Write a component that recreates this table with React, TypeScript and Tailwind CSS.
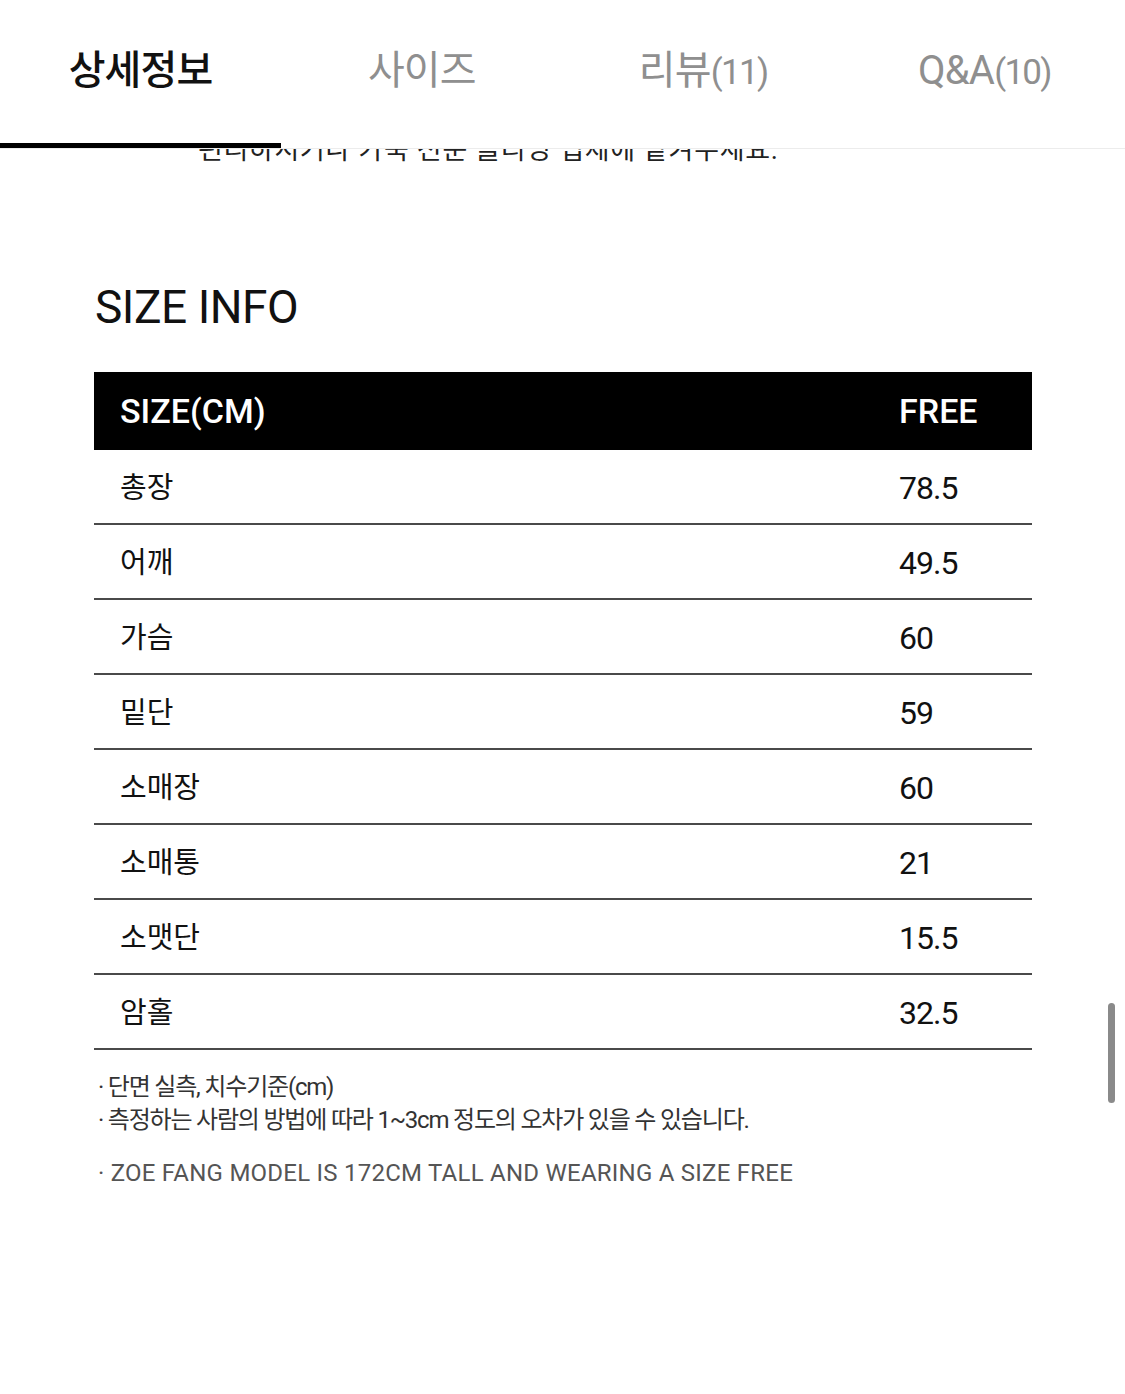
import React from 'react';

const tabs = [
  { label: '상세정보', count: '', active: true },
  { label: '사이즈', count: '', active: false },
  { label: '리뷰', count: '(11)', active: false },
  { label: 'Q&A', count: '(10)', active: false },
];

const rows: [string, string][] = [
  ['총장', '78.5'],
  ['어깨', '49.5'],
  ['가슴', '60'],
  ['밑단', '59'],
  ['소매장', '60'],
  ['소매통', '21'],
  ['소맷단', '15.5'],
  ['암홀', '32.5'],
];

const font = 'font-["Roboto","Noto_Sans_CJK_KR",sans-serif]';

export default function App() {
  return (
    <div className={`relative w-[1125px] h-[1394px] overflow-hidden bg-white ${font}`}>
      {/* 탭 */}
      <nav className="grid grid-cols-4 h-[149px] border-b border-[#ececec]">
        {tabs.map((t) => (
          <div key={t.label} className="flex flex-col items-center">
            <span
              className={
                'mt-[45px] text-[40px] leading-[52px] tracking-[-0.02em] ' +
                (t.active ? 'font-medium text-[#111]' : 'text-[#8f8f8f]')
              }
            >
              {t.label}
              {t.count && <span className="text-[35px] tracking-[-0.05em]">{t.count}</span>}
            </span>
            <div className="flex-1" />
            {t.active && <div className="self-stretch h-[5px] bg-black" />}
          </div>
        ))}
      </nav>

      {/* 탭 아래로 잘린 본문 */}
      <div className="h-[16px] overflow-hidden pl-[198px]">
        <p className="-mt-[14px] text-[27px] leading-[30px] text-[#222] tracking-[0.025em] whitespace-nowrap">
          편리하시거나 가죽 전문 클리닝 업체에 맡겨주세요.
        </p>
      </div>

      <section className="px-[94px] pt-[119px]">
        <h2 className="pl-px text-[46px] leading-[46px] font-normal text-[#111] tracking-[-0.01em]">
          SIZE INFO
        </h2>

        <div className="mt-[42px] w-[938px]">
          <div className="flex items-center h-[78px] bg-black text-white text-[34px] font-medium">
            <div className="w-[805px] pl-[26px]">SIZE(CM)</div>
            <div>FREE</div>
          </div>
          {rows.map(([label, value]) => (
            <div
              key={label}
              className="flex items-center h-[75px] border-b-2 border-[#4a4a4a] text-[#111]"
            >
              <div className="w-[805px] pl-[26px] pt-[5px] text-[29px]">{label}</div>
              <div className="pt-[2px] text-[32px] tracking-[-0.03em]">{value}</div>
            </div>
          ))}
        </div>

        <ul className="mt-[21px] pl-[4px] text-[24px] leading-[33px] tracking-[-0.05em] text-[#333]">
          <li>· 단면 실측, 치수기준(cm)</li>
          <li>· 측정하는 사람의 방법에 따라 1~3cm 정도의 오차가 있을 수 있습니다.</li>
          <li className="mt-[20px] text-[#555] tracking-[0.01em]">
            · ZOE FANG MODEL IS 172CM TALL AND WEARING A SIZE FREE
          </li>
        </ul>
      </section>

      {/* 스크롤바 */}
      <div className="absolute left-[1108px] top-[1003px] w-[7px] h-[100px] rounded-full bg-[#8a8a8a]" />
    </div>
  );
}
